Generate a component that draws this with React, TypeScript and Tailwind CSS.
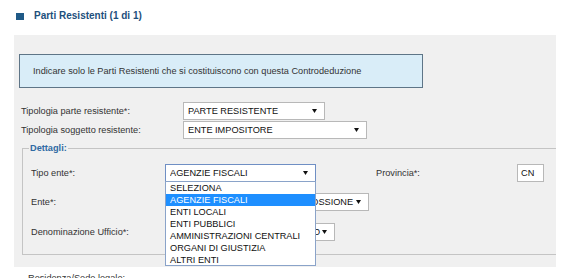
import React from "react";

const Arrow = () => (
  <svg width="5" height="4" viewBox="0 0 5 4" className="shrink-0">
    <path d="M0 0 H5 L2.5 4 Z" fill="#111" />
  </svg>
);

function Select({
  w,
  text,
  focused = false,
  children,
}: {
  w: string;
  text: string;
  focused?: boolean;
  children?: React.ReactNode;
}) {
  return (
    <div
      className={`relative ${w} h-[18px] shrink-0 bg-white border ${
        focused ? "border-[#6f8fc4]" : "border-[#b8b8b8]"
      } flex items-center pl-[4px] pr-[7px]`}
    >
      <span className="flex-1 whitespace-nowrap overflow-hidden text-[#111]">{text}</span>
      <Arrow />
      {children}
    </div>
  );
}

const options = [
  "SELEZIONA",
  "AGENZIE FISCALI",
  "ENTI LOCALI",
  "ENTI PUBBLICI",
  "AMMINISTRAZIONI CENTRALI",
  "ORGANI DI GIUSTIZIA",
  "ALTRI ENTI",
];

export default function App() {
  return (
    <div className="relative w-[566px] h-[278px] bg-white overflow-hidden font-['Liberation_Sans',Arial,sans-serif] text-[9.2px] leading-[12px] text-[#333]">
      {/* header */}
      <div className="h-[35px] pt-[10px] flex items-start">
        <div className="flex items-center h-[12px]">
          <div className="ml-[16px] w-[8px] h-[7px] bg-[#1f5a87]" />
          <span className="ml-[10px] text-[10px] font-bold text-[#1d4f7c]">Parti Resistenti (1 di 1)</span>
        </div>
      </div>

      {/* panel */}
      <div className="ml-[14px] w-[542px] h-[232px] bg-[#f0f0f0] pt-[19px] flex flex-col">
        <div className="ml-[5px] w-[404px] h-[34px] bg-[#d9edf8] border border-[#5e7587] flex items-center pl-[13px]">
          Indicare solo le Parti Resistenti che si costituiscono con questa Controdeduzione
        </div>

        <div className="mt-[14px] flex items-center">
          <span className="ml-[7px] w-[162px]">Tipologia parte resistente*:</span>
          <Select w="w-[142px]" text="PARTE RESISTENTE" />
        </div>
        <div className="mt-[1px] flex items-center">
          <span className="ml-[7px] w-[162px]">Tipologia soggetto resistente:</span>
          <Select w="w-[184px]" text="ENTE IMPOSITORE" />
        </div>

        <fieldset className="mt-[3px] ml-[8px] border border-r-0 border-[#c4c4c4] pb-[13px]">
          <legend className="ml-[6px] px-[1px] text-[#2f6aa3] font-bold leading-[12px]">Dettagli:</legend>
          <div className="mt-[10px] flex items-center">
            <span className="ml-[8px] w-[134px]">Tipo ente*:</span>
            <Select w="w-[151px]" text="AGENZIE FISCALI" focused>
              <div className="absolute left-[-1px] top-full w-[151px] h-[85px] bg-white border border-[#8aa3c9] z-10">
                {options.map((o, i) => (
                  <div
                    key={o}
                    className={`h-[12px] pl-[4px] whitespace-nowrap ${
                      i === 1 ? "bg-[#1e8fff] text-white" : "text-[#111]"
                    }`}
                  >
                    {o}
                  </div>
                ))}
              </div>
            </Select>
            <span className="ml-[60px] w-[141px]">Provincia*:</span>
            <div className="w-[27px] h-[18px] bg-white border border-[#b8b8b8] flex items-center pl-[3px] text-[#111]">
              CN
            </div>
          </div>
          <div className="mt-[11px] flex items-center">
            <span className="ml-[8px] w-[134px]">Ente*:</span>
            <Select w="w-[204px]" text="AGENZIA DELLE ENTRATE-RISCOSSIONE" />
          </div>
          <div className="mt-[12px] flex items-center">
            <span className="ml-[8px] w-[134px]">Denominazione Ufficio*:</span>
            <Select w="w-[170px]" text="DIREZIONE PROVINCIALE CUNEO" />
          </div>
        </fieldset>
      </div>

      <div className="ml-[28px] mt-[5px] text-[#333]">Residenza/Sede legale:</div>
    </div>
  );
}
